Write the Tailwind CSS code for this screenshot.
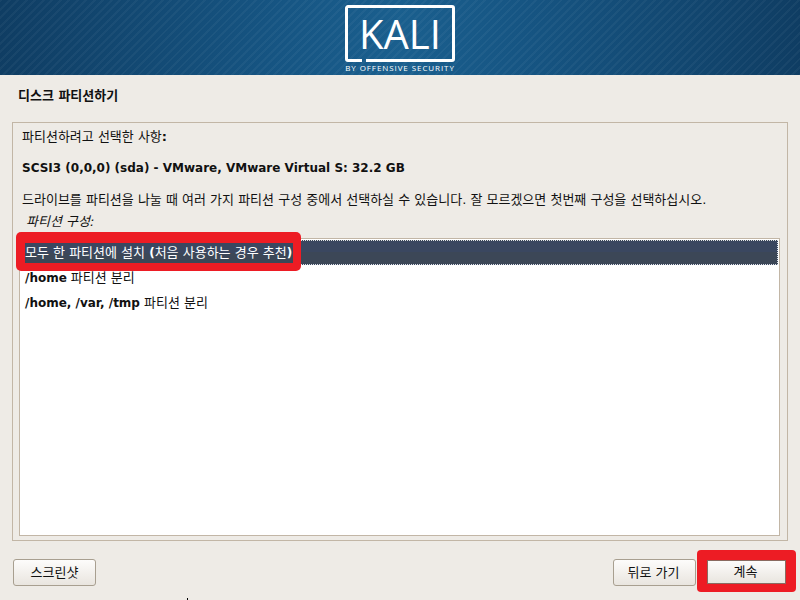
<!DOCTYPE html>
<html lang="ko">
<head>
  <meta charset="UTF-8" />
  <title>디스크 파티션하기</title>
  <script src="https://cdn.jsdelivr.net/npm/@tailwindcss/browser@4"></script>
</head>
<body class="relative w-[800px] h-[600px] overflow-hidden bg-[#eeebe6] text-[#111] text-[13px] font-['DejaVu_Sans','Noto_Sans_CJK_KR',sans-serif]">
  <!-- banner -->
  <header class="h-[75px] flex flex-col items-center pt-[5px] bg-[repeating-linear-gradient(135deg,#ffffff0a_0px,#ffffff0a_2px,#ffffff00_2px,#ffffff00_6px),linear-gradient(90deg,#0f3d63_0%,#165583_35%,#1a5f8e_50%,#165583_65%,#0f3d63_100%)]">
    <div class="relative w-[110px] h-[57px] flex items-center justify-center">
      <svg class="absolute inset-0" width="110" height="57" viewBox="0 0 110 57" fill="none">
        <path d="M17 55.5H3a1.5 1.5 0 0 1-1.500-1.500V3A1.500 1.500 0 0 1 3 1.500h104a1.500 1.500 0 0 1 1.500 1.500v51a1.500 1.500 0 0 1-1.500 1.500H21" stroke="#fff" stroke-width="3"/>
      </svg>
      <span class="text-white text-[40px] leading-none font-medium font-['Open_Sans',sans-serif]">KALI</span>
    </div>
    <div class="text-white text-[8px] leading-none tracking-[0.92px] font-['Open_Sans',sans-serif] font-medium mt-[2px]">BY OFFENSIVE SECURITY</div>
  </header>

  <h1 class="h-[47px] flex items-center pl-[18px] pb-[6px] font-bold">디스크 파티션하기</h1>

  <main class="mx-[12px] w-[776px] h-[419px] border border-[#c2b6a6] px-[6px] flex flex-col">
    <p class="pl-[3px] mt-[5px] h-[18px] leading-[18px]">파티션하려고 선택한 사항<b>:</b></p>
    <p class="pl-[3px] mt-[13px] h-[18px] leading-[18px] font-bold text-[12px]">SCSI3 (0,0,0) (sda) - VMware, VMware Virtual S: 32.2 GB</p>
    <p class="pl-[3px] mt-[14px] h-[18px] leading-[18px]">드라이브를 파티션을 나눌 때 여러 가지 파티션 구성 중에서 선택하실 수 있습니다. 잘 모르겠으면 첫번째 구성을 선택하십시오.</p>
    <p class="pl-[7px] mt-[4px] h-[18px] leading-[18px] italic">파티션 구성:</p>

    <div class="mt-[7px] h-[298px] w-[761px] border border-[#c2b6a6] bg-white p-px flex flex-col">
      <div class="relative h-[25px] shrink-0 flex items-center border border-dotted border-[#dfe3e8] bg-[linear-gradient(#3a4760_50%,#3c4757_50%)]">
        <div class="absolute left-[-6px] top-[-9px] w-[285px] h-[39px] rounded-[5px] bg-[#ed1c24]"></div>
        <span class="relative ml-[3px] w-[268px] h-[20px] flex items-center bg-[linear-gradient(#3a4760_50%,#3c4757_50%)] text-white whitespace-nowrap">모두 한 파티션에 설치&nbsp;<b class="text-[12px]">(</b>처음 사용하는 경우 추천<b class="text-[12px]">)</b></span>
      </div>
      <div class="h-[25px] flex items-center pl-[4px]"><b class="mr-[4px] text-[12px]">/home</b> 파티션 분리</div>
      <div class="h-[25px] flex items-center pl-[4px]"><b class="mr-[4px] text-[12px]">/home, /var, /tmp</b> 파티션 분리</div>
    </div>
  </main>

  <footer class="flex items-center justify-between pl-[13px] pr-[14px] mt-[18px]">
    <button class="w-[83px] h-[27px] border border-[#a89f90] rounded-[3px] bg-[linear-gradient(#fdfcfb,#e9e5df)]">스크린샷</button>
    <div class="flex gap-[10px]">
      <button class="w-[83px] h-[27px] pr-[2px] border border-[#a89f90] rounded-[3px] bg-[linear-gradient(#fdfcfb,#e9e5df)]">뒤로 가기</button>
      <div class="relative w-[80px] h-[27px]">
        <div class="absolute left-[-9px] top-[-9px] w-[99px] h-[42px] rounded-[4px] bg-[#ed1c24]"></div>
        <button class="relative block ml-px mt-px w-[79px] h-[24px] pr-[2px] border border-[#8a6a60] bg-[linear-gradient(#fdfcfb,#e9e5df)]">계속</button>
      </div>
    </div>
  </footer>
  <!-- pointer tip at the bottom edge -->
  <div class="absolute left-[187px] top-[598px] w-px h-[2px] bg-black"></div>
</body>
</html>
